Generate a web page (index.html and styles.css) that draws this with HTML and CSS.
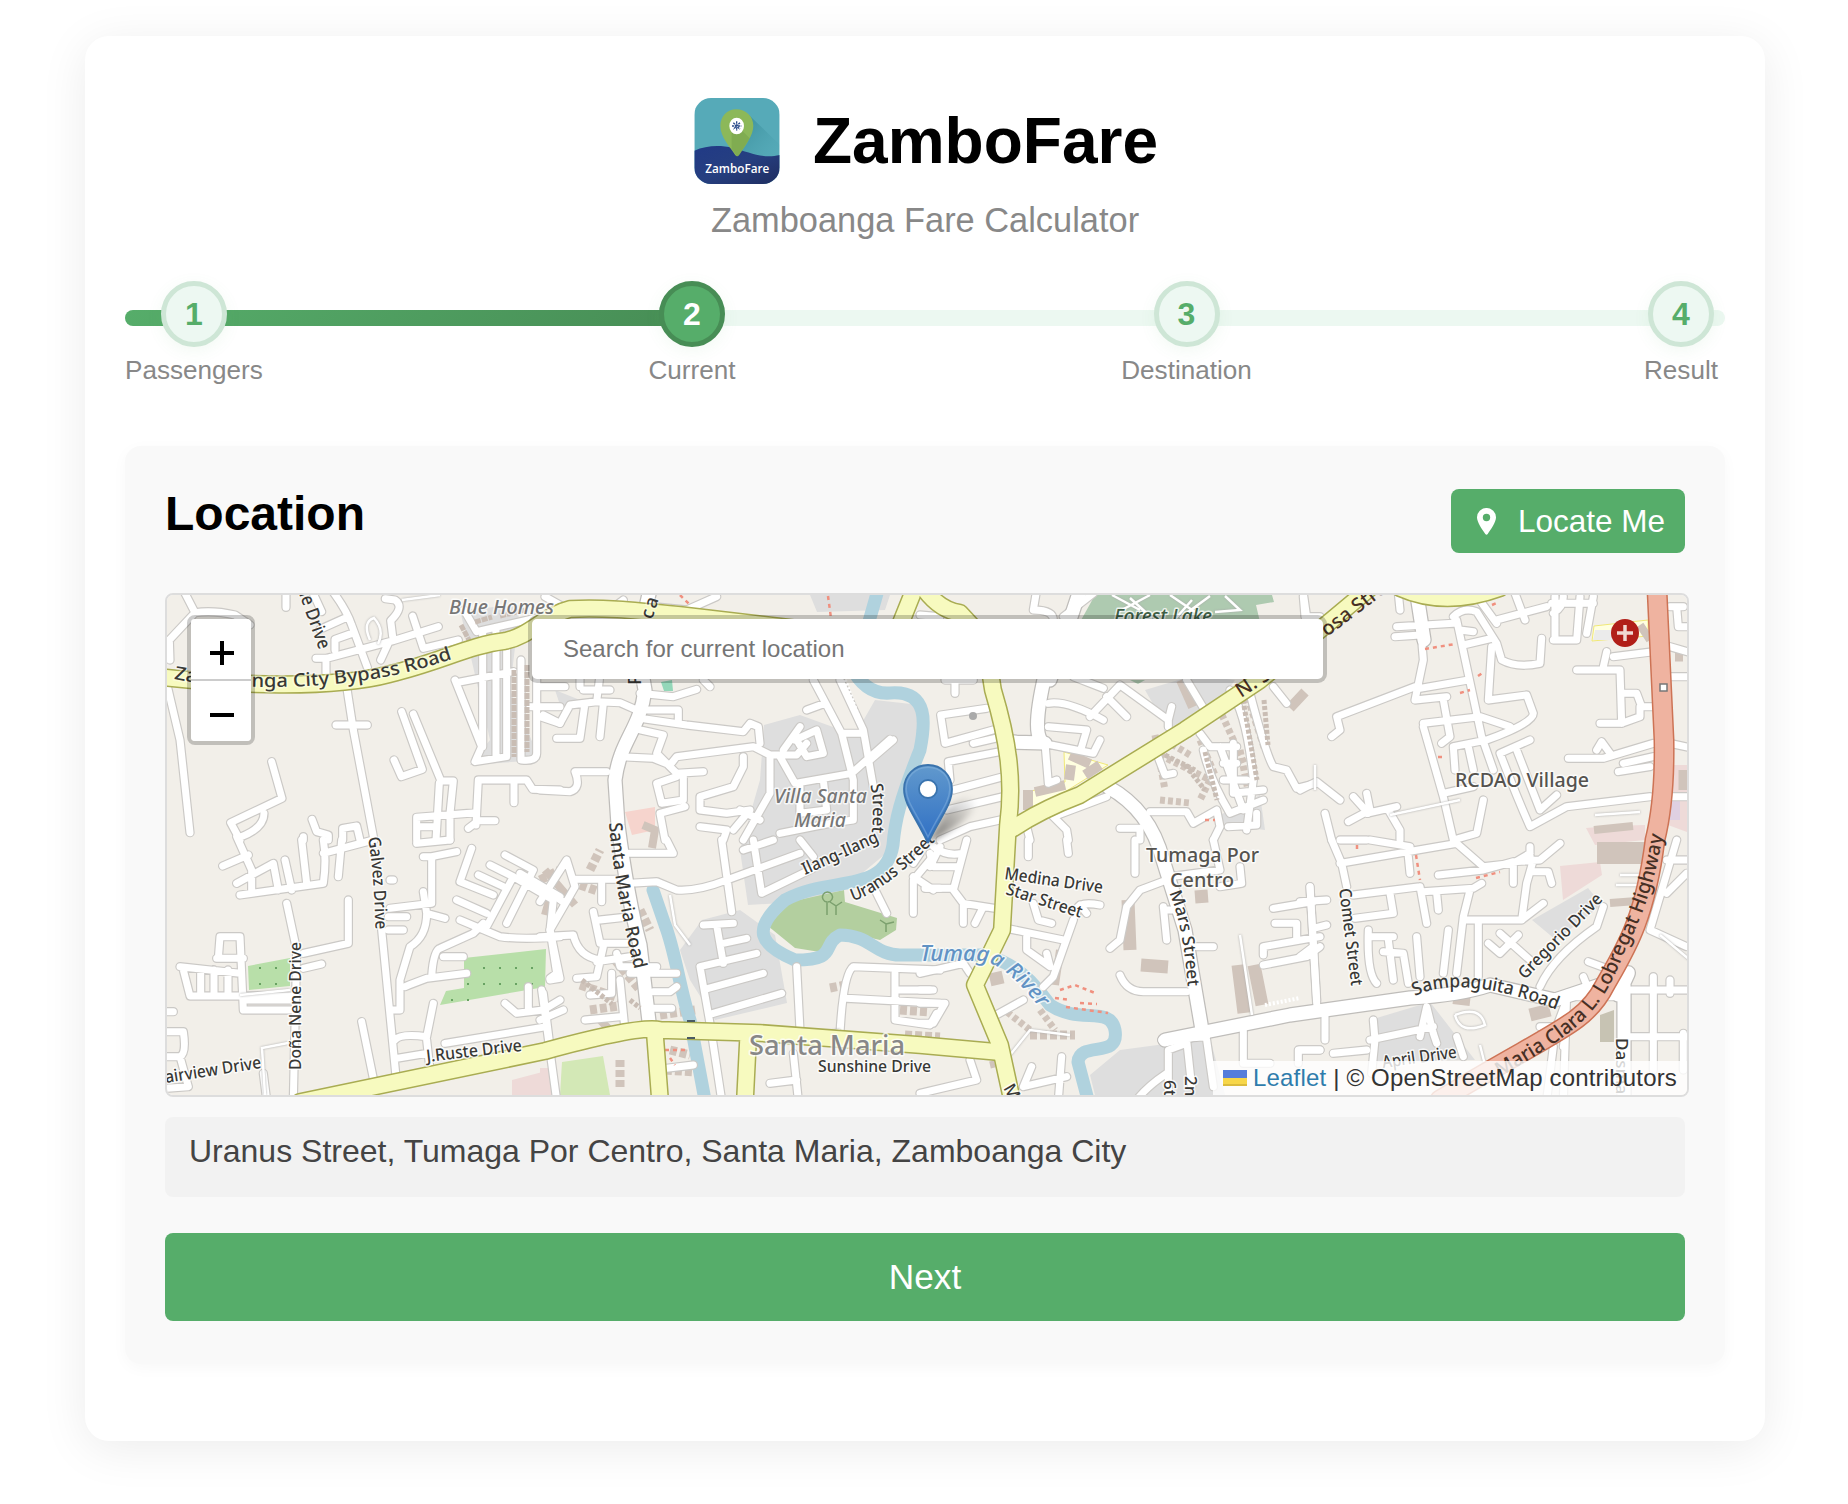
FILE: index.html
```html
<!DOCTYPE html>
<html lang="en">
<head>
<meta charset="utf-8">
<title>ZamboFare</title>
<link rel="stylesheet" href="styles.css">
</head>
<body>
<main class="card">
  <header class="header">
    <div class="brand">
      <svg class="logo" viewBox="0 0 256 258" aria-hidden="true">
        <defs>
          <clipPath id="logoClip"><rect width="256" height="258" rx="50"/></clipPath>
          <linearGradient id="sea" x1="0" y1="0" x2="1" y2="1"><stop offset="0" stop-color="#213a86"/><stop offset=".5" stop-color="#263f80"/><stop offset="1" stop-color="#1f2d60"/></linearGradient>
          <linearGradient id="cast" x1="0" y1="0" x2="1" y2="1"><stop offset="0" stop-color="#2d7f8c" stop-opacity=".75"/><stop offset="1" stop-color="#4da5b3" stop-opacity="0"/></linearGradient>
        </defs>
        <g clip-path="url(#logoClip)">
          <rect width="256" height="258" fill="#56aab8"/>
          <path d="M163 50L256 140V185L130 175Z" fill="url(#cast)"/>
          <path d="M0 158C35 143 75 140 115 150C165 162 205 184 256 171V258H0Z" fill="url(#sea)"/>
          <path d="M126 34C98 34 78 56 78 84C78 116 106 146 122 170Q129 180 136 169C154 140 177 112 177 83C177 55 154 34 126 34Z" fill="#8cb859"/>
          <path d="M145 100L166 121L136 169Q129 178 127 174L112 152V104Z" fill="#6d9c47" opacity=".4"/>
          <ellipse cx="127" cy="84" rx="22" ry="25" fill="#fff"/>
          <path d="M127 70V98M113 84H141M117 74L137 94M137 74L117 94" stroke="#2b4c8c" stroke-width="4" stroke-dasharray="7 2"/>
          <text x="33" y="224" textLength="192" lengthAdjust="spacingAndGlyphs" class="logo-text">ZamboFare</text>
        </g>
      </svg>
      <h1 class="title">ZamboFare</h1>
    </div>
    <p class="subtitle">Zamboanga Fare Calculator</p>
  </header>

  <ol class="steps">
    <li class="step"><span class="dot">1</span><span class="step-label">Passengers</span></li>
    <li class="step"><span class="dot dot-active">2</span><span class="step-label">Current</span></li>
    <li class="step"><span class="dot">3</span><span class="step-label">Destination</span></li>
    <li class="step"><span class="dot">4</span><span class="step-label">Result</span></li>
  </ol>

  <section class="panel">
    <div class="panel-head">
      <h2 class="panel-title">Location</h2>
      <button class="locate" type="button">
        <svg class="locate-icon" viewBox="0 0 19 27" aria-hidden="true"><path fill="#fff" fill-rule="evenodd" d="M9.5 0A9.3 9.5 0 0 0 0 9.6C0 14 5 21.500 8.300 26Q9.500 27.300 10.700 26C14 21.500 19 14 19 9.600A9.300 9.500 0 0 0 9.500 0ZM9.500 5.800A3.700 3.700 0 1 1 9.500 13.200A3.700 3.700 0 1 1 9.500 5.800Z"/></svg>
        <span>Locate Me</span>
      </button>
    </div>

    <div class="map">
      <svg class="tiles" viewBox="167 595 1520 500" aria-label="Map">
        <defs>
          <g id="minor">
            <path transform="translate(160 580) scale(.33333)" d="M70 30L105 98L28 180L30 240M105 98Q160 90 225 105L270 135M378 30V82M455 30L485 95M515 30Q560 90 575 135L622 262M480 148L560 112M525 210V178L582 158M468 235H500L700 182L835 140M498 235V280M662 240L685 190M698 170L692 122Q735 80 705 60L676 56M758 108L790 205L895 180M912 90L950 155L1190 100M20 310L60 480L90 758M560 320L580 450L642 780M528 435H622M335 545L366 655L212 728L240 780M312 700Q312 745 240 772M725 395L787 568L724 590L702 540M760 402L843 603H880L870 700V780M838 610L828 780M770 780V712L950 698M885 300L965 500L945 545L1040 530V200M890 308L1060 275M968 160V500M1008 150V530M1130 120V520Q1130 545 1085 540M1083 240V540M1110 380H1200M1140 410L1200 430M948 735L955 600H1100L1118 628L1200 630M1062 605V668M1005 722H955L925 745M456 718L470 755L505 765V780M548 780V745L590 738L600 780M430 770V780M770 740H830"/>
            <path transform="translate(540 580) scale(.33333)" d="M15 50L60 75M250 60L210 90M340 80L440 90L530 50M0 320H75M10 405L60 430L90 375L170 365L240 368L290 390M120 290V320M178 300L170 365M210 330H130M135 370L120 475H50M190 370L180 470M300 340L400 350L470 328M490 300L510 320M300 390H415V430M300 415L440 435L610 455L630 430L655 440L660 490M280 445L370 465L350 520L410 580M240 530L340 535L390 555L410 530L640 500L690 525H770L800 490M690 530V640L610 780M720 530L765 610L935 580L1050 478M730 510L780 440M765 480L830 450L850 520L800 530L770 480M820 300L905 460L940 600V720L870 730L720 760M800 390L855 370M905 460H960M900 300L970 450L1000 620M0 630L90 635Q125 625 105 575H200M410 580L490 575M430 580V660L365 670L350 610L410 590M435 680L360 700L375 780M610 530V560L580 620L480 650V690L560 700L630 690L580 750M480 740L560 750L550 780M600 690L660 720M780 620V700L860 690L850 600M1060 480L990 540"/>
            <path transform="translate(920 580) scale(.33333)" d="M0 105L60 110M350 30L340 90Q400 90 400 120M520 40L430 110M75 300H160M105 300V340M200 385L62 405L75 490L220 450M160 490L225 475M240 515L85 545L90 600M250 590L100 630M250 650L80 690M240 720L150 740L60 780M385 370Q440 360 550 420M385 440L500 450L485 500M370 490L520 520L540 480M375 490L385 610L410 600M460 290L550 325M510 410L600 315L745 420L755 380M560 350L620 410M745 420V440M800 300L860 400M710 520L735 585L760 580M930 330Q980 400 1000 600L980 750M990 340Q1040 530 1060 560L1100 570L1130 625L1190 610M840 460L870 500H950M850 510Q870 600 930 700L1030 660M900 500L970 690M910 550H950M910 600H980M940 490V640L1030 630M925 740L1010 735V700M560 650L400 710L440 750L445 780M690 695H800L820 730L890 690L900 740L880 780M890 690L820 730M600 745H660V780M320 740L330 780M1150 40L1160 110L1200 110M1060 320L1100 370"/>
            <path transform="translate(1300 580) scale(.33333)" d="M10 50L15 110M295 40L300 90M355 60L370 240L345 360L440 350M290 140L460 130M285 170L360 165M345 320L110 410L120 450L95 470M360 325L505 300M470 120L545 470L580 570M460 110Q490 80 530 95L590 190L605 240Q650 265 720 250L725 175M535 55L590 130M490 195L575 175M480 150L520 155M590 120L740 80M645 40L675 120M575 200L565 360L680 345L700 400Q700 430 560 480L460 500L465 570M370 430L540 410L630 440M370 440L430 650L460 780M430 360L450 470L425 490M430 640L520 620M505 500L520 570M690 480L600 520Q650 650 690 740L800 680L1050 650M650 510L720 690L770 645M550 660L530 760L460 780M765 50V180M790 50Q790 80 760 100M840 50L830 180H760M880 50L860 160M755 70H880M830 270L960 270L965 430H900M920 215L910 260M940 230L1060 215M965 340H1010L1025 380H1060M1020 380V410L965 430M805 535H910L1060 490M890 510L905 485L930 520M970 550L1060 530M955 575L1050 560M0 630L50 605L120 660M160 650L205 700M200 640L210 690L145 725M200 700L290 680M265 690L300 750L300 780M75 700L95 780M120 780H200M1110 80H1150M1130 80L1135 140H1170M1110 200L1180 220M1110 290H1180M1110 490L1180 505M1100 650H1180"/>
            <path transform="translate(160 840) scale(.33333)" d="M230 -10L275 90V150M188 78L265 45M230 130L340 70L355 150M375 60L395 150M240 165L490 130Q500 60 490 0M425 0L440 130M535 110L545 0M490 40L640 0M565 180V310L430 340M430 385L485 372M380 190L410 330L400 780M175 355L180 290H240L250 510H400M170 355H250M60 380L240 400M70 390L90 468H400M122 390V460M162 390V460M204 390V460M260 480L400 480M20 515H40M20 575H70Q80 640 60 650H20M60 650L85 740L20 745M310 700L320 780M605 545L645 740M665 270L710 730M690 205L815 190L815 50L890 35M770 10L870 0M790 50H820M690 120H700M685 230H740M685 270H730M790 155L800 220L855 235M800 220Q800 290 750 320L720 420V510H700M735 440Q760 430 800 415L920 400M815 410Q820 330 840 325L940 280L970 250M850 350H910M705 600Q720 580 800 590L820 490M710 655L800 640M855 610L1160 560M1150 460L1170 620M1035 490L1070 520L1150 510L1200 480M1105 440V515M935 25L900 125L1000 165M990 75L1060 110L980 260M1035 45L1120 90L1040 250M955 105L1030 140M890 180L980 220M900 240L1020 290Q1090 300 1200 290M1060 110L1180 180L1170 270L1190 400L1170 415M1080 100L1200 170M800 600L810 690"/>
            <path transform="translate(540 840) scale(.33333)" d="M0 185L80 60L105 140L30 270M20 150L75 190M100 118H230M185 130V185M265 40L400 40L380 0M270 130L350 125L410 150Q470 155 560 120L780 40M545 0L575 215M640 0L665 160L830 80M610 30L700 0M780 0L820 50M0 290L100 285Q115 350 180 360M30 270L60 415L30 420M160 215L180 310L260 310M180 240L270 230M190 320L170 410L110 415M170 365L270 350M230 340L240 380H350M270 400H410M340 455H390L410 440M340 505H395M215 400V460L150 465M240 420L255 570M135 540L240 530M0 540L70 510M5 450L50 780M490 255L580 250M530 255L550 370M480 380L650 340M550 310L620 295M505 445L670 400M520 520L725 460M480 380L510 550L545 780M770 380L780 570M900 580Q910 400 940 380L1200 390M920 475L1200 490M1065 400V540L1170 555L1190 520M1065 450H1180M380 685L460 675M760 640L775 780M690 730L770 720M1170 60L1120 120V220M1170 80L1200 20M1160 145H1200M1000 140L1040 220M1120 110L1180 150"/>
            <path transform="translate(920 840) scale(.33333)" d="M40 20Q80 50 125 40M140 0L100 150L130 190L225 205M30 40L40 80H110M15 145H90M130 190V250M185 210L165 250M325 0V50M440 0L445 40M260 265L430 300M320 290V330L390 380L380 340M460 240L400 410L370 440M340 190L355 240L395 250M470 225Q460 180 540 195M500 220L480 195M740 120L660 150L620 200L600 300L570 325M645 0V100M730 200L740 300M740 210H760M830 320H880M880 0L900 90L750 110M960 80L965 130L900 140M600 405Q620 455 670 455H800M1170 140L1190 490M1060 205L1180 185M1065 250H1130V300M1200 290L1030 320V345M1030 375L1160 350L1200 320M0 400L130 370L150 400M0 450H30M0 490H75L40 550H0M220 530L310 480M150 660L170 720L0 760M335 680L310 740L440 710M425 650L415 780M725 600L860 590M745 780V630L800 610M800 600L815 740M860 600L880 740M650 780Q680 740 740 700M970 570V670H1050M1200 630H1135V670M0 40L-20 70"/>
            <path transform="translate(1300 840) scale(.33333)" d="M95 0L125 70L140 140M120 70L470 10L550 80L640 70L690 40M210 0L330 20M325 50L330 100M415 105L550 90L640 65L720 60L780 10M690 20V50M640 70V130M700 60L680 130L665 240M690 95H745L755 130M160 165L360 140M370 155L520 145L545 130M360 140L380 250M270 160L280 220L165 235M410 160L415 210M510 150L490 230L470 400M490 240L665 240L730 190M445 270L430 400M535 250V410M350 290L360 410M205 270Q200 400 230 430M210 290H280M265 300L280 420M250 335L310 340L325 430M30 140L50 480M0 185L80 180M40 265L80 255M40 320L0 350M565 310L600 340L655 285M600 280L690 360M720 440Q760 350 890 260L910 200M865 365L960 400M790 780L800 460M800 470Q830 440 900 460M720 560H770L800 480M850 410L870 460M800 560L790 620M760 620L740 780M210 600L400 560M360 590L380 500L400 580L410 610M220 540L225 600L215 700M75 510V600M0 630H60M100 640L200 630M470 590L490 650M800 470H950M980 450H1160M1060 410V690M990 590H1160M1150 580V690M1110 420V460M1130 0L1050 270L1160 320M1100 60H1160M1100 160L1160 100"/>
          </g>
          <g id="mid">
            <path d="M650 590C635 650 640 660 645 690C640 730 620 740 615 780L618 825Q628 900 640 945L650 1030"/>
            <path d="M1045 675Q1030 740 1045 743L1005 742L1015 742"/>
            <path d="M1080 590L1050 680"/>
            <path d="M1108 787Q1150 810 1163 860L1185 930L1202 1030"/>
            <path d="M1165 1040L1290 1015L1410 998Q1460 995 1490 985L1555 1000L1600 985"/>
            <path d="M1618 995Q1635 960 1624 980V1095"/>
            <path d="M1417 595L1424 640"/>
          </g>
          <g id="main">
            <path d="M160 677C230 685 330 690 390 674C440 662 470 645 505 641C530 636 545 615 570 609C600 607 630 610 680 615L980 650"/>
            <path d="M912 595L900 625M925 590Q940 610 960 613L985 640L993 690C1008 740 1014 780 1008 825L1002 930Q985 965 975 985L1000 1045L1012 1100"/>
            <path d="M1009 831Q1040 810 1080 795L1185 730L1260 680L1370 588"/>
            <path d="M1400 588Q1445 608 1500 588"/>
            <path d="M300 1102L545 1051Q640 1025 660 1030L760 1033L920 1045L998 1052M655 1035L660 1100M748 1040L745 1100"/>
          </g>
          <path id="trunk" d="M1657 590L1664 740Q1665 800 1655 840C1645 920 1625 950 1605 985C1585 1025 1555 1030 1440 1100"/>
          <path id="river" d="M878 590L868 625L850 665Q865 695 890 693C930 690 925 725 920 750C900 800 895 820 893 845C885 895 830 875 785 900C750 930 760 945 795 960C840 960 820 945 840 935C870 935 875 955 900 955H985C1020 965 1035 985 1050 1005C1080 1025 1110 1005 1115 1030C1120 1060 1080 1040 1078 1062L1088 1100M653 890L665 925C675 950 680 990 690 1020L705 1100"/>
          <path id="lBypass" d="M174 679C240 692 330 688 390 676C420 670 440 663 470 653"/>
          <path id="lGalvez" d="M368 838Q376 880 376 980"/>
          <path id="lNene" d="M297 588L328 675"/>
          <path id="lMariaRd" d="M609 823Q615 900 645 1010"/>
          <path id="lUranus" d="M853 901Q890 890 955 820"/>
          <path id="lIlang" d="M805 875L900 832"/>
          <path id="lStreet" d="M870 785Q876 800 870 850"/>
          <path id="lMedina" d="M1004 879L1144 899"/>
          <path id="lStar" d="M1005 894L1112 928"/>
          <path id="lMars" d="M1169 893Q1187 930 1190 1030"/>
          <path id="lTumaga" d="M920 961H980Q1010 962 1060 1036"/>
          <path id="lComet" d="M1339 889L1357 1032"/>
          <path id="lSampa" d="M1415 996Q1470 970 1585 1022"/>
          <path id="lGreg" d="M1525 980L1625 878"/>
          <path id="lHighway" d="M1500 1077C1570 1035 1600 1020 1625 950Q1658 890 1668 800"/>
          <path id="lFair" d="M166 1083L300 1062"/>
          <path id="lRuste" d="M427 1062L572 1045"/>
        </defs>

        <rect x="167" y="595" width="1520" height="500" fill="#f2efe9"/>

        <g fill="#dedede">
          <path d="M810 595H890L885 610L817 612ZM764 725L800 715L855 735L875 700L920 705L915 780L890 850L830 900L748 905L740 850L760 780ZM702 920L740 910L775 935L787 1003L715 1020L690 980L680 950ZM1145 690L1195 675L1235 680L1200 730L1165 725ZM1090 1075L1120 1050L1210 1038L1225 1095H1095ZM1370 1020L1430 1002L1475 1060L1370 1062ZM1532 920L1588 888L1602 905L1556 940ZM460 610L520 605L510 690L540 760L470 765L490 740Z"/>
          <path d="M555 690L580 700L565 720ZM1220 815L1260 795L1265 830L1225 825Z"/>
        </g>
        <path fill="#b8dfa9" d="M248 966L290 958V986L249 990ZM464 958L546 949L545 987L440 1005L446 991L464 988Z"/>
        <path fill="#68a262" d="M259 967h2v2h-2zM275 967h2v2h-2zM259 983h2v2h-2zM275 983h2v2h-2zM483 967h2v2h-2zM499 967h2v2h-2zM515 967h2v2h-2zM531 967h2v2h-2zM467 983h2v2h-2zM483 983h2v2h-2zM499 983h2v2h-2zM515 983h2v2h-2zM531 983h2v2h-2zM451 999h2v2h-2zM467 999h2v2h-2z"/>
        <path fill="#b3cf9f" d="M768 926L790 902L844 890L845 902L897 918L896 930L880 940L845 932L820 952L795 948Z"/>
        <path fill="#d3e8b6" d="M562 1062L603 1056L610 1095H560Z"/>
        <path fill="#aecab0" d="M1095 595H1272L1274 602L1256 605L1260 622H1080ZM1130 680H1145L1138 684Z"/>
        <path fill="#94d7b9" d="M661 682L672 680L673 691L664 691Z"/>
        <path fill="#eedad8" d="M1560 866L1600 862L1602 875L1563 900ZM1586 828L1610 826L1645 825V840L1595 845ZM1672 765H1687V832L1668 825ZM512 1080L550 1070V1095H512ZM540 1068H552V1095H540Z"/>
        <path fill="#f6d4cd" d="M625 812L655 807V830L632 835Z"/>
        <path fill="#dfd0e2" d="M1670 800H1680V820H1668Z"/>
        <path fill="#ffffe0" stroke="#f0e878" d="M1064 752L1108 765L1060 795L1025 810L1024 793L1065 782ZM1594 626L1648 620V636L1592 641Z"/>
        <path fill="#ebebeb" d="M1595 630H1630V640H1593Z"/>

        <g fill="none" stroke="#d0c4bb">
          <path stroke-width="10" d="M1070 755L1090 764M1071 765L1069 780M1028 790V810M1035 792L1065 785M1085 775L1100 765M1181 680L1193 707M1290 708L1305 692"/>
          <path stroke-width="7" stroke-dasharray="5 3" d="M1160 755L1210 780L1200 800M1165 740L1190 755M1160 800L1190 803M1200 740L1215 775M1215 700L1245 765M1245 690L1265 750M1240 750L1250 800M1155 735L1165 790M1040 1010L1055 1030M995 1040L1010 1080M1007 1012L1030 1030M990 1065L1010 1060"/>
          <path stroke-width="9" stroke-dasharray="7 3" d="M580 985L625 1000M590 1010L625 1005M615 960L640 990M540 880L560 870M580 885L600 892M640 910L650 930M660 1015L695 1010M670 1050L690 1055M665 1070L695 1072M830 988L845 985M1030 1035L1075 1035M900 1010L930 1012M905 1035L940 1037M620 1060V1090M590 870L600 850M1040 810L1070 800"/>
          <path stroke-width="13" d="M1128 900L1130 950M1141 965L1168 967M1238 965L1244 1013M1254 965L1262 1005M1195 897L1208 896M990 980L1003 977M1685 770V790M1675 655H1683M1530 1015L1550 1010"/>
          <path stroke-width="22" d="M1597 853H1645"/>
          <path stroke-width="8" d="M1594 830L1633 826M1453 1000L1470 1002M1610 903L1650 900M643 825L655 830L652 848M545 870L575 905M552 890L545 915M1060 950L1055 985M1640 625L1650 640M600 1020L610 1030"/>
        </g>
        <path fill="#c7c3b3" d="M1600 1015L1614 1010V1042H1600Z"/>

        <use href="#river" class="river"/>
        <use href="#minor" class="minor-casing"/>
        <use href="#mid" class="mid-casing"/>
        <use href="#minor" class="minor-fill"/>
        <use href="#mid" class="mid-fill"/>
        <g fill="none" stroke="#c9bdb4">
          <path stroke-width="5" stroke-dasharray="6 1" d="M514 670V757M527 665V752M475 622L492 617M500 616L525 610M461 625L470 642"/>
          <path stroke-width="5" stroke-dasharray="4 2" d="M1243 700L1257 780M1205 752L1217 800M1165 755L1195 770M1185 765L1205 790M1264 700L1268 745M582 980L612 1004M630 1000L640 1008"/>
        </g>
        <path class="thin" d="M1112 595L1140 610M1118 612L1150 595M1130 598L1152 618M1170 595L1195 612M1180 618L1210 596M1215 612L1240 610L1225 596M1192 600L1176 618"/>
        <path class="thin" d="M240 995L290 990M265 1095L262 1048L288 1043M402 600L440 595M370 640Q362 622 374 618Q385 630 378 644M670 895L675 925L690 945M1240 935L1252 1015M1455 1015Q1480 1005 1485 1025Q1460 1035 1455 1015M1480 1045L1485 1065M1660 935L1690 960M1390 815L1460 800M1595 815L1640 812M1620 875H1645M1616 885H1645M1315 765V790M1010 1055L1030 1030L1070 1035M840 1030L780 1040"/>
        <path class="steps-path" d="M680 595L690 605M828 596L831 618M1425 649L1455 644M1478 676L1484 672M1460 693L1470 690M1438 757L1444 757M1416 855L1420 880M1476 878L1500 872M1357 845V852M1060 990L1075 985L1095 993M1055 998L1070 1000M1080 1003L1097 1004M1066 1007L1108 1013M665 1050L685 1050M1492 605L1499 602M670 1058L675 1065M1205 820H1215"/>
        <path fill="none" stroke="#fff" stroke-width="4" stroke-dasharray="2 2" d="M845 680L865 735M1265 1005L1300 998"/>
        <path fill="none" stroke="#7ca16e" stroke-width="1.500" d="M827 915V902A5 5 0 1 1 828 902M836 915V906L830 902M836 906L842 902M886 932V924L880 920M886 924L894 922"/>

        <use href="#main" class="main-casing"/>
        <use href="#main" class="main-fill"/>
        <use href="#trunk" class="trunk-casing"/>
        <use href="#trunk" class="trunk-fill"/>
        <path stroke="#4a5a62" stroke-width="2" d="M687 1021H695M687 1038H695"/>
        <circle cx="1625" cy="633" r="14" fill="#b11f19"/>
        <path d="M1617 633H1633M1625 625V641" stroke="#f0d8d2" stroke-width="3.500"/>
        <rect x="1660" y="684" width="7" height="7" fill="#fff" stroke="#777" stroke-width="1.500"/>
        <circle cx="973" cy="716" r="4" fill="#aaa"/>

        <g class="label road">
          <text><textPath href="#lBypass" textLength="282" lengthAdjust="spacingAndGlyphs">Zamboanga City Bypass Road</textPath></text>
          <text><textPath href="#lNene" textLength="66" lengthAdjust="spacingAndGlyphs">ne Drive</textPath></text>
          <text class="sm"><textPath href="#lGalvez" textLength="92" lengthAdjust="spacingAndGlyphs">Galvez Drive</textPath></text>
          <text><textPath href="#lMariaRd" textLength="149" lengthAdjust="spacingAndGlyphs">Santa Maria Road</textPath></text>
          <text class="sm"><textPath href="#lUranus" textLength="103" lengthAdjust="spacingAndGlyphs">Uranus Street</textPath></text>
          <text class="sm"><textPath href="#lIlang" textLength="82" lengthAdjust="spacingAndGlyphs">Ilang-Ilang</textPath></text>
          <text class="sm"><textPath href="#lStreet" textLength="48" lengthAdjust="spacingAndGlyphs">Street</textPath></text>
          <text class="sm"><textPath href="#lMedina" textLength="99" lengthAdjust="spacingAndGlyphs">Medina Drive</textPath></text>
          <text class="sm"><textPath href="#lStar" textLength="79" lengthAdjust="spacingAndGlyphs">Star Street</textPath></text>
          <text class="sm"><textPath href="#lMars" textLength="96" lengthAdjust="spacingAndGlyphs">Mars Street</textPath></text>
          <text class="sm"><textPath href="#lComet" textLength="98" lengthAdjust="spacingAndGlyphs">Comet Street</textPath></text>
          <text><textPath href="#lSampa" textLength="146" lengthAdjust="spacingAndGlyphs">Sampaguita Road</textPath></text>
          <text class="sm"><textPath href="#lGreg" textLength="112" lengthAdjust="spacingAndGlyphs">Gregorio Drive</textPath></text>
          <text class="lg"><textPath href="#lHighway" textLength="305" lengthAdjust="spacingAndGlyphs">Maria Clara L. Lobregat Highway</textPath></text>
          <text class="lg" transform="translate(1241 698) rotate(-33)">N. S</text>
          <text class="lg" transform="translate(1327 637) rotate(-37)">osa Street</text>
          <text class="sm"><textPath href="#lFair" textLength="97" lengthAdjust="spacingAndGlyphs">airview Drive</textPath></text>
          <text class="sm"><textPath href="#lRuste" textLength="96" lengthAdjust="spacingAndGlyphs">J.Ruste Drive</textPath></text>
          <text transform="translate(301 1070) rotate(-90)" class="sm" textLength="128" lengthAdjust="spacingAndGlyphs">Doña Nene Drive</text>
          <text x="818" y="1072" class="sm" textLength="113" lengthAdjust="spacingAndGlyphs">Sunshine Drive</text>
          <text transform="translate(1383 1068) rotate(-8)" class="sm" textLength="75" lengthAdjust="spacingAndGlyphs">April Drive</text>
          <text transform="translate(1616 1038) rotate(90)" class="sm">Dasma</text>
          <text transform="translate(1185 1076) rotate(90)" class="sm">2nd</text>
          <text transform="translate(1164 1080) rotate(90)" class="sm">6th</text>
          <text transform="translate(652 620) rotate(-72)" textLength="22">ca</text>
          <text transform="translate(641 685) rotate(-90)">P</text>
          <text transform="translate(1003 1088) rotate(60)" class="sm">M</text>
        </g>
        <g class="label place">
          <text x="1455" y="787" textLength="134" lengthAdjust="spacingAndGlyphs">RCDAO Village</text>
          <text x="1146" y="862" textLength="113" lengthAdjust="spacingAndGlyphs">Tumaga Por</text>
          <text x="1170" y="887" textLength="64" lengthAdjust="spacingAndGlyphs">Centro</text>
        </g>
        <g class="label area">
          <text x="449" y="614" textLength="105" lengthAdjust="spacingAndGlyphs">Blue Homes</text>
          <text x="774" y="803" textLength="93" lengthAdjust="spacingAndGlyphs">Villa Santa</text>
          <text x="794" y="827" textLength="52" lengthAdjust="spacingAndGlyphs">Maria</text>
          <text x="1114" y="623" textLength="98" lengthAdjust="spacingAndGlyphs" class="park">Forest Lake</text>
        </g>
        <text class="label suburb" x="749" y="1055" textLength="156" lengthAdjust="spacingAndGlyphs">Santa Maria</text>
        <text class="label water"><textPath href="#lTumaga" textLength="138" lengthAdjust="spacingAndGlyphs">Tumaga River</textPath></text>
      </svg>

      <div class="zoom">
        <button class="zoom-btn" type="button" aria-label="Zoom in"><svg width="24" height="26" viewBox="0 0 24 26"><path d="M0 13H24M12 1V25" stroke="#000" stroke-width="4"/></svg></button>
        <button class="zoom-btn" type="button" aria-label="Zoom out"><svg width="24" height="26" viewBox="0 0 24 26"><path d="M0 13H24" stroke="#000" stroke-width="4"/></svg></button>
      </div>
      <input class="search" type="text" placeholder="Search for current location">
      <svg class="marker" viewBox="0 0 110 84" aria-hidden="true">
        <defs>
          <linearGradient id="pin" x1="0" y1="0" x2="0" y2="1"><stop offset="0" stop-color="#6199cd"/><stop offset="1" stop-color="#2f6fc4"/></linearGradient>
          <linearGradient id="shade" x1="0" y1="1" x2="1" y2="0"><stop offset="0" stop-color="#000" stop-opacity=".55"/><stop offset="1" stop-color="#000" stop-opacity="0"/></linearGradient>
          <filter id="soft"><feGaussianBlur stdDeviation="3"/></filter>
        </defs>
        <path d="M25 79L43 45Q66 26 72 40Q70 56 25 79Z" fill="url(#shade)" filter="url(#soft)"/>
        <path d="M25 1C11 1 1 12 1 25C1 40 12 52 24.500 78Q25 79 25.500 78C38 52 49 40 49 25C49 12 39 1 25 1Z" fill="url(#pin)" stroke="#3a73ad" stroke-width="1.800"/>
        <path d="M25 3.200C12 3.200 3.200 13 3.200 25C3.200 38 14 50 25 73C36 50 46.800 38 46.800 25C46.800 13 38 3.200 25 3.200Z" fill="none" stroke="#8bb8e0" stroke-opacity=".45" stroke-width="1.500"/>
        <circle cx="25" cy="25" r="9" fill="#fff" stroke="#3a74af" stroke-width="1.800"/>
      </svg>
      <div class="attribution">
        <svg class="flag" viewBox="0 0 24 16" aria-hidden="true"><path fill="#557ddb" d="M0 0h24v8H0z"/><path fill="#f7d648" d="M0 8h24v6H0z"/><path fill="#dbbb3c" d="M0 14h24v2H0z"/></svg>
        <span><a class="leaflet">Leaflet</a> | © OpenStreetMap contributors</span>
      </div>
    </div>

    <p class="address">Uranus Street, Tumaga Por Centro, Santa Maria, Zamboanga City</p>
    <button class="next" type="button">Next</button>
  </section>
</main>
</body>
</html>
```

FILE: styles.css
```css
* { box-sizing: border-box; }

body {
  margin: 0;
  min-height: 1504px;
  padding: 36px 83px 0 85px;
  background: #fff;
  color: #000;
  font-family: "Liberation Sans", Arial, sans-serif;
}

button, input { font-family: inherit; }
h1, h2, p, ol { margin: 0; padding: 0; }

.card {
  width: 1680px;
  height: 1405px;
  padding: 62px 40px 78px;
  border-radius: 24px;
  background: #fff;
  box-shadow: 0 8px 48px rgba(0, 0, 0, .08);
}

/* Header */
.header {
  display: flex;
  flex-direction: column;
  align-items: center;
}
.brand {
  display: flex;
  align-items: center;
  gap: 33px;
  height: 86px;
  padding-left: 2px;
}
.logo { width: 86px; height: 86px; }
.logo-text {
  font: 600 37px "Open Sans", "Noto Sans", sans-serif;
  fill: #fff;
}
.title { font-size: 64px; line-height: 74px; }
.subtitle {
  margin-top: 16px;
  font-size: 34.4px;
  line-height: 40px;
  color: #888;
}

/* Progress */
.steps {
  position: relative;
  display: flex;
  justify-content: space-between;
  margin-top: 41px;
  list-style: none;
}
.steps::before,
.steps::after {
  content: "";
  position: absolute;
  left: 0;
  top: 29px;
  width: 100%;
  height: 16px;
  border-radius: 8px;
  background: #ecf8f1;
}
.steps::after {
  width: 567px;
  background: linear-gradient(135deg, #56ad6a, #478d55);
}
.step {
  position: relative;
  z-index: 1;
  display: flex;
  flex-direction: column;
  align-items: center;
  min-width: 88px;
}
.dot {
  display: flex;
  align-items: center;
  justify-content: center;
  width: 66px;
  height: 66px;
  border: 5px solid #cee6d6;
  border-radius: 50%;
  background: #edf8f2;
  box-shadow: 0 4px 16px rgba(86, 173, 106, .08);
  font-size: 32px;
  font-weight: 700;
  color: #56ad6a;
}
.dot-active {
  border-color: #478d55;
  background: #56ad6a;
  color: #fff;
}
.step-label {
  margin-top: 8px;
  font-size: 26.1px;
  line-height: 30px;
  color: #888;
}

/* Location panel */
.panel {
  height: 918px;
  margin-top: 61px;
  padding: 43px 40px 42px;
  border-radius: 16px;
  background: #f9f9f9;
  box-shadow: 0 4px 16px rgba(0, 0, 0, .03);
}
.panel-head {
  display: flex;
  align-items: flex-start;
  justify-content: space-between;
  height: 64px;
}
.panel-title {
  margin-top: -3px;
  font-size: 48px;
  line-height: 56px;
}
.locate {
  display: flex;
  align-items: center;
  justify-content: space-between;
  width: 234px;
  height: 64px;
  padding: 0 20px 0 26px;
  border: 0;
  border-radius: 8px;
  background: #56ad6a;
  color: #fff;
  font-size: 31.500px;
}
.locate-icon { width: 19px; height: 27px; }

/* Map */
.map {
  position: relative;
  width: 1524px;
  height: 504px;
  margin-top: 40px;
  border: 2px solid #ddd;
  border-radius: 8px;
  overflow: hidden;
}
.tiles { display: block; width: 1520px; height: 500px; }

.minor-casing, .minor-fill, .mid-casing, .mid-fill,
.main-casing, .main-fill, .trunk-casing, .trunk-fill, .river {
  fill: none;
  stroke-linecap: round;
  stroke-linejoin: round;
}
.minor-casing { stroke: #cbc9c6; stroke-width: 28px; }
.minor-fill { stroke: #fff; stroke-width: 21px; }
.mid-casing { stroke: #bfbdba; stroke-width: 15.500px; }
.mid-fill { stroke: #fff; stroke-width: 13px; }
.main-casing { stroke: #a9ac52; stroke-width: 18.500px; }
.main-fill { stroke: #f7fabf; stroke-width: 15.500px; }
.trunk-casing { stroke: #cd7355; stroke-width: 21px; }
.trunk-fill { stroke: #efb3a0; stroke-width: 18px; }
.river { stroke: #b0d2de; stroke-width: 13px; }
.thin { fill: none; stroke: #fff; stroke-width: 2.500px; filter: drop-shadow(0 0 1px #aaa); }
.steps-path { fill: none; stroke: #f0907f; stroke-width: 2.500px; stroke-dasharray: 4 4; }

.label {
  font-family: "Noto Sans", "Open Sans", sans-serif;
  font-size: 20px;
  font-weight: 500;
  paint-order: stroke;
  stroke: rgba(255, 255, 255, .75);
  stroke-width: 3px;
  stroke-linejoin: round;
}
.road { font-size: 18.500px; fill: #383835; stroke: rgba(255, 255, 255, .4); }
.road .sm { font-size: 17px; stroke: rgba(255, 255, 255, .75); }
.road .lg { font-size: 20px; stroke: none; fill: #462f24; }
.place { fill: #55534f; }
.area { fill: #777; font-style: italic; }
.park { fill: #3e5f45; }
.suburb { font-size: 27px; fill: #888; }
.water { font-size: 21px; font-style: italic; fill: #6192c4; }

.zoom {
  position: absolute;
  top: 20px;
  left: 20px;
  display: flex;
  flex-direction: column;
  width: 68px;
  border: 4px solid rgba(0, 0, 0, .2);
  border-radius: 8px;
  background-clip: padding-box;
}
.zoom-btn {
  display: flex;
  align-items: center;
  justify-content: center;
  height: 60px;
  padding: 7px 0 0 2px;
  border: 0;
  background: #fff;
  border-radius: 0 0 4px 4px;
}
.zoom-btn:first-child {
  height: 62px;
  border-bottom: 2px solid #ccc;
  border-radius: 4px 4px 0 0;
}
.search {
  position: absolute;
  top: 20px;
  left: 361px;
  width: 799px;
  height: 68px;
  padding: 0 31px;
  border: 4px solid rgba(0, 0, 0, .2);
  border-radius: 9px;
  background: #fff;
  background-clip: padding-box;
  font-size: 24px;
}
.search::placeholder { color: #757575; }
.marker {
  position: absolute;
  left: 736px;
  top: 169px;
  width: 110px;
  height: 84px;
}
.attribution {
  position: absolute;
  right: 0;
  bottom: 0;
  display: flex;
  align-items: center;
  gap: 6px;
  height: 34px;
  padding: 0 10px;
  background: rgba(255, 255, 255, .8);
  color: #333;
  font-size: 24px;
  letter-spacing: .17px;
  line-height: 34px;
  white-space: nowrap;
}
.flag { width: 24px; height: 16px; }
.leaflet { color: #2f7cac; }

.address {
  height: 80px;
  margin-top: 20px;
  padding: 16px 24px;
  border-radius: 8px;
  background: #f2f2f2;
  color: #444;
  font-size: 32px;
  line-height: 36px;
}
.next {
  display: block;
  width: 100%;
  height: 88px;
  margin-top: 36px;
  border: 0;
  border-radius: 8px;
  background: #56ad6a;
  color: #fff;
  font-size: 35.200px;
}
```
